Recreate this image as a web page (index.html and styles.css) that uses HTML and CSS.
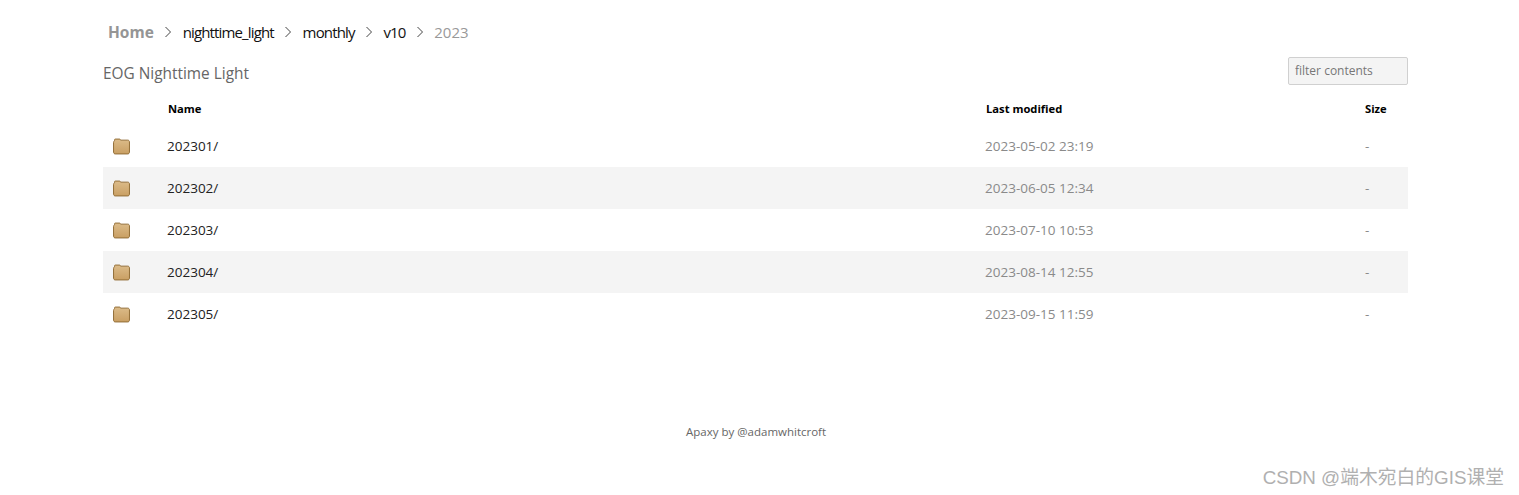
FILE: index.html
```html
<!DOCTYPE html>
<html>
<head>
    <title>EOG Nighttime Light</title>
    <meta charset="UTF-8">
    <link rel="stylesheet" href="styles.css">
</head>
<body>
    <div class="wrapper">
        <nav class="breadcrumb">
            <a class="crumb home" href="#">Home</a>
            <svg class="sep" viewBox="0 0 8 12"><path d="M1.5 1l5 5-5 5"/></svg>
            <a class="crumb" href="#">nighttime_light</a>
            <svg class="sep" viewBox="0 0 8 12"><path d="M1.5 1l5 5-5 5"/></svg>
            <a class="crumb" href="#">monthly</a>
            <svg class="sep" viewBox="0 0 8 12"><path d="M1.5 1l5 5-5 5"/></svg>
            <a class="crumb" href="#">v10</a>
            <svg class="sep" viewBox="0 0 8 12"><path d="M1.5 1l5 5-5 5"/></svg>
            <span class="crumb current">2023</span>
        </nav>
        <div class="heading">
            <h1>EOG Nighttime Light</h1>
            <input class="filter" type="text" placeholder="filter contents">
        </div>
        <table class="listing">
            <thead>
                <tr>
                    <th class="col-icon"></th>
                    <th class="col-name">Name</th>
                    <th class="col-date">Last modified</th>
                    <th class="col-size">Size</th>
                </tr>
            </thead>
            <tbody>
                <tr>
                    <td class="col-icon"><svg class="folder" viewBox="0 0 16 16"><use href="#folder"/></svg></td>
                    <td class="col-name"><a href="#">202301/</a></td>
                    <td class="col-date">2023-05-02 23:19</td>
                    <td class="col-size">-</td>
                </tr>
                <tr>
                    <td class="col-icon"><svg class="folder" viewBox="0 0 16 16"><use href="#folder"/></svg></td>
                    <td class="col-name"><a href="#">202302/</a></td>
                    <td class="col-date">2023-06-05 12:34</td>
                    <td class="col-size">-</td>
                </tr>
                <tr>
                    <td class="col-icon"><svg class="folder" viewBox="0 0 16 16"><use href="#folder"/></svg></td>
                    <td class="col-name"><a href="#">202303/</a></td>
                    <td class="col-date">2023-07-10 10:53</td>
                    <td class="col-size">-</td>
                </tr>
                <tr>
                    <td class="col-icon"><svg class="folder" viewBox="0 0 16 16"><use href="#folder"/></svg></td>
                    <td class="col-name"><a href="#">202304/</a></td>
                    <td class="col-date">2023-08-14 12:55</td>
                    <td class="col-size">-</td>
                </tr>
                <tr>
                    <td class="col-icon"><svg class="folder" viewBox="0 0 16 16"><use href="#folder"/></svg></td>
                    <td class="col-name"><a href="#">202305/</a></td>
                    <td class="col-date">2023-09-15 11:59</td>
                    <td class="col-size">-</td>
                </tr>
            </tbody>
        </table>
        <div class="footer">Apaxy by @adamwhitcroft</div>
    </div>
    <div class="watermark">CSDN @端木宛白的GIS课堂</div>
    <svg class="defs" width="0" height="0">
        <defs>
            <linearGradient id="folder-fill" x1="0" y1="0" x2="0" y2="1">
                <stop offset="0" stop-color="#dcbc8a"/>
                <stop offset="1" stop-color="#c99f63"/>
            </linearGradient>
            <symbol id="folder" viewBox="0 0 16 16">
                <path d="M1.5 2.500V1.500C1.500 1.200 1.800 1 2.100 1h4c.4 0 .7.2.8.5l.2.5h6.800c.9 0 1.600.7 1.600 1.600v9.700c0 .9-.7 1.700-1.600 1.700H2.100C1.200 15 .5 14.200 .5 13.300V4.200C.5 3.400.9 2.800 1.500 2.500z" fill="url(#folder-fill)" stroke="#8f6a32" stroke-width=".9"/>
            </symbol>
        </defs>
    </svg>
</body>
</html>
```

FILE: styles.css
```css
body {
    margin: 0;
    background-color: #ffffff;
    font-family: "Open Sans", "Noto Sans", sans-serif;
    color: #222222;
}
a {
    color: inherit;
    text-decoration: none;
}
.wrapper {
    width: 1305px;
    margin-left: 103px;
}
.breadcrumb {
    display: flex;
    align-items: center;
    height: 24px;
    padding-top: 20px;
    padding-left: 5px;
}
.crumb {
    font-size: 15px;
    letter-spacing: -0.85px;
    color: #111111;
}
.home {
    font-weight: 700;
    font-size: 15.500px;
    letter-spacing: 0;
    color: #959595;
}
.current {
    letter-spacing: 0;
    color: #999999;
}
.sep {
    width: 8px;
    height: 12px;
    margin: 0 10.400px;
    fill: none;
    stroke: #444444;
    stroke-width: 1;
}
.heading {
    display: flex;
    justify-content: space-between;
    align-items: center;
    margin-top: 13px;
    height: 28px;
}
h1 {
    margin: 0;
    padding-top: 4px;
    font-size: 15.400px;
    font-weight: 400;
    color: #666666;
}
.filter {
    box-sizing: border-box;
    width: 120px;
    height: 28px;
    padding: 0 6px 2px;
    border: 1px solid #d0d0d0;
    border-radius: 2px;
    background-color: #f4f4f4;
    font-family: inherit;
    font-size: 12px;
}
.filter::placeholder {
    color: #777777;
    opacity: 1;
}
.listing {
    width: 100%;
    margin-top: 10px;
    border-collapse: collapse;
    table-layout: fixed;
}
.listing th {
    box-sizing: border-box;
    height: 30px;
    padding: 0 0 3px;
    text-align: left;
    font-size: 11.200px;
    font-weight: 700;
    color: #000000;
}
.listing td {
    height: 42px;
    padding: 0;
    font-size: 13.500px;
}
.listing tbody tr:nth-child(even) {
    background-color: #f4f4f4;
}
.col-icon {
    width: 64px;
}
.listing th.col-name,
.listing th.col-date {
    padding-left: 1px;
}
.col-date {
    width: 380px;
}
.col-size {
    width: 43px;
}
td.col-date,
td.col-size {
    color: #8a8a8a;
}
.folder {
    display: block;
    width: 17px;
    height: 17px;
    margin-left: 10px;
}
.footer {
    margin-top: 89px;
    margin-left: 583px;
    font-size: 11.500px;
    color: #666666;
}
.watermark {
    position: absolute;
    right: 15px;
    top: 462px;
    font-family: "Liberation Sans", "Noto Sans CJK SC", sans-serif;
    font-size: 18.800px;
    color: #b0b0b0;
}
.defs {
    position: absolute;
}
```
